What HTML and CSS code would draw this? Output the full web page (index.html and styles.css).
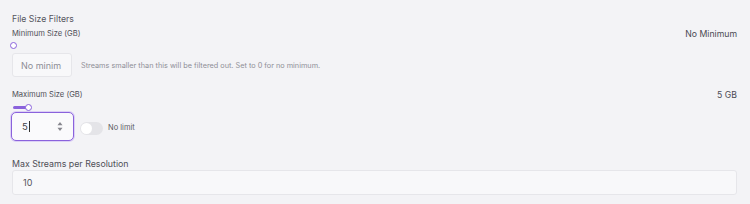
FILE: index.html
```html
<!DOCTYPE html>
<html lang="en">
<head>
    <meta charset="UTF-8">
    <title>File Size Filters</title>
    <link rel="stylesheet" href="styles.css">
</head>
<body>
    <div class="panel">
        <div class="section-title">File Size Filters</div>

        <div class="field-head">
            <label>Minimum Size (GB)</label>
            <span class="field-value">No Minimum</span>
        </div>
        <div class="slider">
            <div class="slider-fill" style="width: 0px;"></div>
            <div class="slider-thumb" style="left: 0px;"></div>
        </div>
        <div class="row row-min">
            <div class="box box-small placeholder">No minim</div>
            <span class="help">Streams smaller than this will be filtered out. Set to 0 for no minimum.</span>
        </div>

        <div class="field-head head-max">
            <label>Maximum Size (GB)</label>
            <span class="field-value">5 GB</span>
        </div>
        <div class="slider slider-max">
            <div class="slider-fill" style="width: 15px;"></div>
            <div class="slider-thumb" style="left: 15px;"></div>
        </div>
        <div class="row row-max">
            <div class="box box-number focused">
                <span class="num">5<span class="caret"></span></span>
                <svg class="spin" width="6" height="11" viewBox="0 0 6 11">
                    <path d="M0.5 4.2 L3 1 L5.5 4.2 Z" fill="#85858d"/>
                    <path d="M0.5 6.8 L3 10 L5.5 6.8 Z" fill="#85858d"/>
                </svg>
            </div>
            <div class="toggle"><div class="knob"></div></div>
            <span class="toggle-label">No limit</span>
        </div>

        <div class="field-head head-streams">
            <label>Max Streams per Resolution</label>
        </div>
        <div class="box box-wide">10</div>
    </div>
</body>
</html>
```

FILE: styles.css
```css
body { margin: 0; background: #f3f3f6; font-family: Inter, "Noto Sans", sans-serif; color: #4a4a52; }
.panel { padding: 13px 13px 0 12px; }
.section-title { font-size: 8.7px; line-height: 13px; color: #55555d; }
.field-head { display: flex; justify-content: space-between; align-items: center; margin-top: 1px; height: 13px; }
.field-head label { font-size: 7.6px; color: #4f4f57; }
.field-value { font-size: 8.7px; color: #4a4a52; }
.head-max { margin-top: 11px; }
.head-streams { margin-top: 16px; }
.head-streams label { font-size: 8.8px; }

.slider { position: relative; height: 7px; margin-top: 2px; margin-left: 1px; }
.slider-max { margin-top: 3px; }
.slider-fill { position: absolute; top: 2px; left: 0; height: 3px; background: #8a62dc; border-radius: 2px; }
.slider-thumb {
    position: absolute;
    top: 0;
    width: 7px;
    height: 7px;
    margin-left: -3px;
    box-sizing: border-box;
    border: 1.5px solid #8a62dc;
    border-radius: 50%;
    background: #fff;
}

.row { display: flex; align-items: center; }
.row-min { margin-top: 4px; }
.row-max { margin-top: 1px; }
.box {
    box-sizing: border-box;
    background: #f8f8fa;
    border: 1px solid #e6e6ea;
    border-radius: 3px;
    font-size: 9px;
    display: flex;
    align-items: center;
}
.box-small { width: 60px; height: 24px; padding: 0 4px 0 8px; white-space: nowrap; }
.placeholder { color: #8d8d95; }
.help { margin-left: 9px; font-size: 7.3px; color: #8f8f97; }

.box-number {
    width: 63px;
    height: 29px;
    margin-left: -1px;
    padding: 0 10px;
    justify-content: space-between;
    background: #fafafc;
}
.focused { border: 1.5px solid #8a62dc; border-radius: 5px; box-shadow: 0 0 0 1px #dcd0f6; }
.num { color: #3f3f47; font-size: 9.5px; display: flex; align-items: center; }
.caret { display: inline-block; width: 1px; height: 11px; background: #333; margin-left: 1px; }

.toggle { width: 23px; height: 13px; margin-left: 6px; margin-top: 4px; border-radius: 7px; background: #e4e4e8; position: relative; }
.knob { position: absolute; top: 1px; left: 1px; width: 11px; height: 11px; border-radius: 50%; background: #fff; }
.toggle-label { margin-left: 5px; margin-top: 2px; font-size: 7.5px; color: #5a5a62; }

.box-wide { width: 725px; height: 25px; padding-left: 10px; color: #55555d; }
```
